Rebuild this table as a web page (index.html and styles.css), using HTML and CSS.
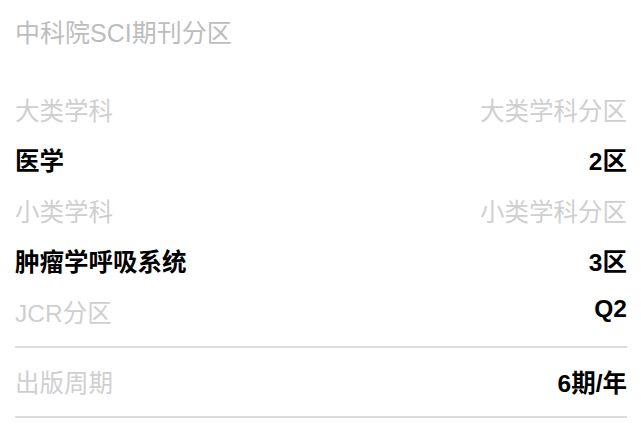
FILE: index.html
```html
<!DOCTYPE html>
<html lang="zh">
<head>
<meta charset="utf-8">
<link rel="stylesheet" href="styles.css">
</head>
<body>
<div class="card">
  <div class="title">中科院SCI期刊分区</div>
  <div class="rows">
    <div class="row"><span class="label">大类学科</span><span class="label">大类学科分区</span></div>
    <div class="row"><span class="value">医学</span><span class="value">2区</span></div>
    <div class="row"><span class="label">小类学科</span><span class="label">小类学科分区</span></div>
    <div class="row"><span class="value">肿瘤学呼吸系统</span><span class="value">3区</span></div>
    <div class="row"><span class="label">JCR分区</span><span class="value raised">Q2</span></div>
  </div>
  <div class="section">
    <div class="row period"><span class="label">出版周期</span><span class="value">6期/年</span></div>
  </div>
</div>
</body>
</html>
```
FILE: styles.css
```css
html, body {
  margin: 0;
  padding: 0;
  background: #ffffff;
}
body {
  font-family: "Liberation Sans", "Noto Sans CJK SC", sans-serif;
  font-size: 24.5px;
  line-height: 1.2;
}
.card {
  padding: 0 14px 0 15px;
}
.title {
  height: 66px;
  line-height: 66px;
  font-size: 25px;
  color: #bdbdbd;
}
.rows {
  margin-top: 20px;
  padding-bottom: 7px;
  border-bottom: 2px solid #dcdcdc;
}
.row {
  display: flex;
  justify-content: space-between;
  align-items: center;
  height: 50.5px;
}
.label {
  color: #cfcfcf;
}
.value {
  color: #000000;
  font-weight: bold;
}
.raised {
  padding-bottom: 10px;
}
.section {
  border-bottom: 2px solid #dcdcdc;
}
.period {
  height: 68px;
  padding-top: 4px;
  box-sizing: border-box;
}
```
